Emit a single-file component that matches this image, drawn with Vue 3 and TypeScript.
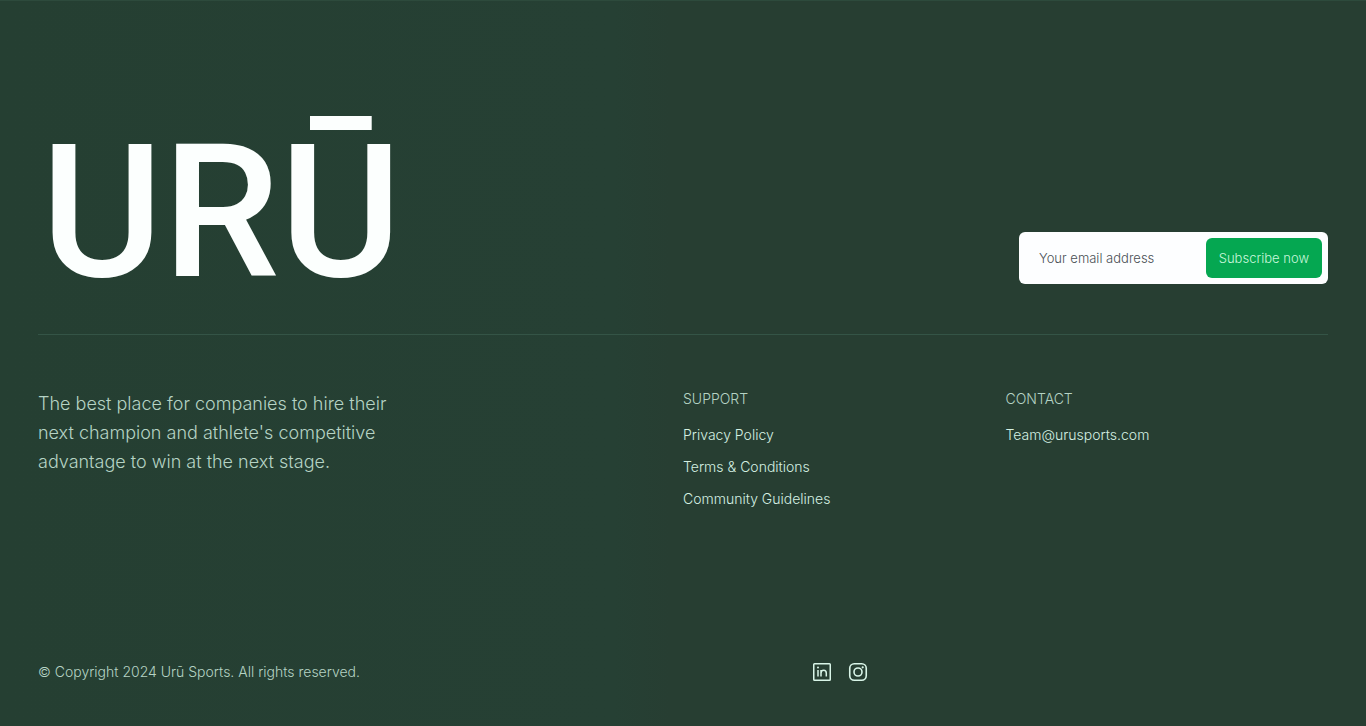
<script setup lang="ts">
import { ref } from 'vue'

interface FooterLink {
  label: string
  href: string
}

interface LinkGroup {
  title: string
  links: FooterLink[]
}

const email = ref<string>('')

const groups: LinkGroup[] = [
  {
    title: 'SUPPORT',
    links: [
      { label: 'Privacy Policy', href: '#privacy' },
      { label: 'Terms & Conditions', href: '#terms' },
      { label: 'Community Guidelines', href: '#guidelines' },
    ],
  },
  {
    title: 'CONTACT',
    links: [{ label: 'Team@urusports.com', href: 'mailto:Team@urusports.com' }],
  },
]

function subscribe(): void {
  email.value = ''
}
</script>

<template>
  <footer class="footer">
    <div class="top">
      <a class="brand" href="#home">URŪ</a>
      <form class="subscribe" @submit.prevent="subscribe">
        <input v-model="email" type="email" aria-label="Your email address" placeholder="Your email address" />
        <button type="submit">Subscribe now</button>
      </form>
    </div>

    <div class="middle">
      <p class="tagline">
        The best place for companies to hire their next champion and athlete's competitive advantage to win at the
        next stage.
      </p>
      <nav v-for="group in groups" :key="group.title" class="group" :aria-label="group.title">
        <h2>{{ group.title }}</h2>
        <ul>
          <li v-for="link in group.links" :key="link.label">
            <a :href="link.href">{{ link.label }}</a>
          </li>
        </ul>
      </nav>
    </div>

    <div class="bottom">
      <p>© Copyright 2024 Urū Sports. All rights reserved.</p>
      <div class="social">
        <a href="#linkedin" aria-label="LinkedIn">
          <svg viewBox="0 0 20 20" width="20" height="20" fill="none" stroke="currentColor" stroke-width="1.5">
            <rect x="1.75" y="1.75" width="16.5" height="16.5" rx="0.75" />
            <path d="M6 8v6.5M9 14.5V8M9 11.2c0-1.8 1.1-2.9 2.7-2.9 1.6 0 2.6 1.1 2.6 2.9v3.3" />
            <circle cx="6" cy="5.6" r="1" fill="currentColor" stroke="none" />
          </svg>
        </a>
        <a href="#instagram" aria-label="Instagram">
          <svg viewBox="0 0 20 20" width="20" height="20" fill="none" stroke="currentColor" stroke-width="1.6">
            <rect x="1.75" y="1.75" width="16.5" height="16.5" rx="4.5" />
            <circle cx="10" cy="10" r="4" />
            <circle cx="14.7" cy="5.3" r="1.1" fill="currentColor" stroke="none" />
          </svg>
        </a>
      </div>
    </div>
  </footer>
</template>

<style>
body {
  background: #263f33;
}
</style>

<style scoped>
.footer {
  box-sizing: border-box;
  min-height: 100vh;
  padding: 112px 38px 44px;
  display: flex;
  flex-direction: column;
  background: linear-gradient(90deg, #253f32 0%, #264034 45%, #273e32 49%, #273e32 100%);
  border-top: 1px solid #2d4a3c;
  color: #d5f0e2;
  font-family: Inter, 'Liberation Sans', sans-serif;
  font-size: 14px;
  font-weight: 300;
}

.top {
  display: flex;
  justify-content: space-between;
  align-items: flex-end;
  flex-wrap: wrap;
  padding-bottom: 50px;
  border-bottom: 1px solid #345446;
}

.brand {
  padding: 28px 0 0 3px;
  color: #fcfffe;
  font-family: Roboto, Inter, sans-serif;
  font-size: 186px;
  line-height: 143px;
  font-weight: 500;
  text-decoration: none;
}

.subscribe {
  display: flex;
  box-sizing: border-box;
  width: 309px;
  padding: 6px;
  border-radius: 6px;
  background: #fdfeff;
}

.subscribe input {
  flex: 1;
  min-width: 0;
  padding: 0 14px;
  border: 0;
  background: transparent;
  color: #4a5055;
  font: inherit;
  font-size: 13px;
}

.subscribe input::placeholder {
  color: #4a5055;
  opacity: 1;
}

.subscribe button {
  height: 40px;
  padding: 0 13px;
  border: 0;
  border-radius: 6px;
  background: #05a751;
  color: #c9f7dc;
  font: inherit;
  font-size: 13px;
}

.middle {
  display: grid;
  grid-template-columns: 2fr 1fr 1fr;
  padding-top: 54px;
}

.tagline {
  max-width: 370px;
  margin: 0;
  color: #b5d3c4;
  font-size: 18px;
  line-height: 29px;
}

.group h2 {
  margin: 0;
  color: #b5d3c4;
  font: inherit;
  line-height: 20px;
}

.group ul {
  display: grid;
  gap: 12px;
  margin: 16px 0 0;
  padding: 0;
  list-style: none;
  line-height: 20px;
}

.group a {
  color: #d5f0e2;
  text-decoration: none;
}

.bottom {
  display: grid;
  grid-template-columns: 3fr 2fr;
  align-items: center;
  margin-top: auto;
}

.bottom p {
  margin: 0;
  color: #b5d3c4;
  line-height: 20px;
}

.social {
  display: flex;
  gap: 16px;
}

.social a {
  display: flex;
  color: #d9f5e8;
}
</style>
